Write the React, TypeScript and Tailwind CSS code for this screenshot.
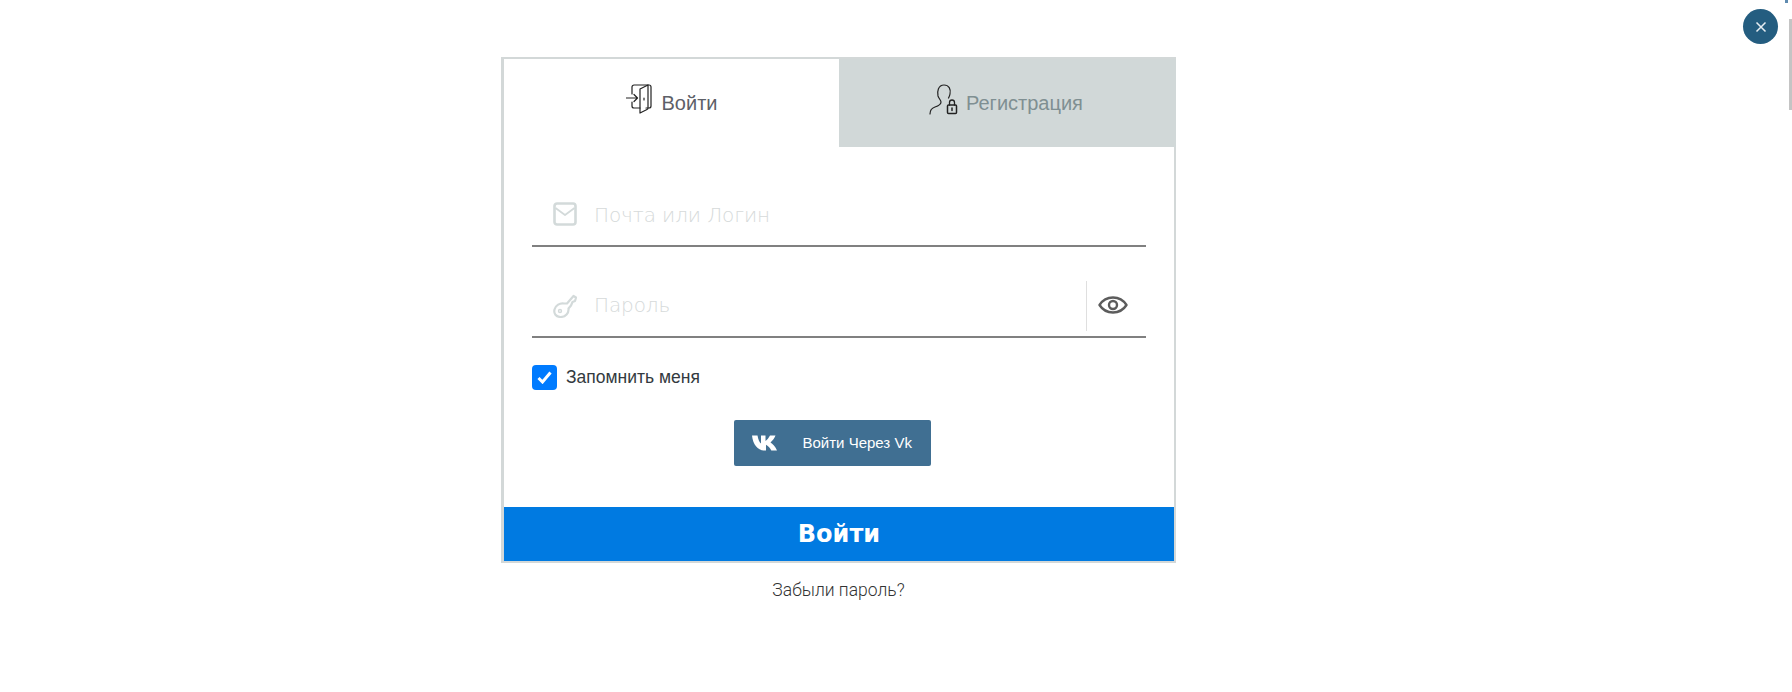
export default function App() {
  return (
    <div className="relative h-[692px] w-full overflow-hidden bg-white font-['Liberation_Sans',sans-serif]">
      <button className="absolute left-[1743px] top-[9px] flex h-[35px] w-[35px] items-center justify-center rounded-full bg-[#245d80]">
        <svg width="12" height="12" viewBox="0 0 12 12" fill="none" stroke="#e8eef2" strokeWidth="1.5">
          <path d="M1.500 1.500l9 9M10.500 1.500l-9 9" />
        </svg>
      </button>
      <div className="absolute right-0 top-[19px] h-[91px] w-[3px] bg-[#c4c4c4]" />
      <div className="absolute left-[1785px] top-0 h-[3px] w-[3px] bg-[#5f8bb0]" />

      <div className="ml-[501px] flex w-[675px] flex-col items-center pt-[57px]">
        <div className="flex h-[506px] w-[675px] flex-col border-t-2 border-r-2 border-b-2 border-l-[3px] border-[#d3d8d8] bg-white">
          <div className="flex h-[88px] shrink-0">
            <div className="flex w-[335px] items-center justify-center gap-[10px] pb-[2px] text-[20px] text-[#5d6068]">
              <svg width="26" height="30" viewBox="0 0 26 30" fill="none" stroke="#222" strokeWidth="1.200" strokeLinejoin="round" strokeLinecap="round" className="mt-[-7px]">
                <path d="M6 10V3A2 2 0 0 1 8 1H23a2 2 0 0 1 2 2V22a2 2 0 0 1-2 2h-3" />
                <path d="M6 18v4a2 2 0 0 0 2 2H14" />
                <path d="M14 5l8-4v23a1.500 1.500 0 0 1-1 1.500l-7 3.500z" />
                <path d="M0.500 14h11M8 10.500L11.500 14 8 17.500" />
                <path d="M18 14v2" />
              </svg>
              <span className="mt-[2px]">Войти</span>
            </div>
            <div className="mr-[-2px] flex flex-1 items-center justify-center gap-[8px] bg-[#d1d8d8] pb-[2px] pr-[3px] text-[20px] text-[#7f8f92]">
              <svg width="29" height="31" viewBox="0 0 29 31" fill="none" stroke="#222" strokeWidth="1.200" strokeLinecap="round" className="mt-[-6px]">
                <path d="M1 30c0-4 2-6 5-7 3-1 6-2 6-5 0-2-2-3-3-6-1-4 0-11 6-11 5 0 7 4 6 9-.3 2-1 3-1.500 4" />
                <rect x="18.500" y="21" width="9" height="8.500" rx="1" strokeWidth="1.500" />
                <path d="M20.500 21v-2.500a2.500 2.500 0 0 1 5 0V21" strokeWidth="1.300" />
                <path d="M23 24v2.500" strokeWidth="1.500" />
              </svg>
              <span className="mt-[2px]">Регистрация</span>
            </div>
          </div>

          <div className="flex flex-1 flex-col px-[28px]">
            <div className="mt-[38px] flex h-[62px] items-center border-b-2 border-[#808080] pb-[2px] pl-[21px]">
              <svg width="24" height="24" viewBox="0 0 24 24" fill="none" stroke="#d3dada" strokeWidth="2.600" strokeLinejoin="round">
                <rect x="1.500" y="1.500" width="21" height="21" rx="2.500" />
                <path d="M2.500 6L12 13l9.500-7" strokeWidth="1.800" />
              </svg>
              <span className="ml-[17px] mt-[1px] font-['DejaVu_Sans',sans-serif] text-[20px] font-extralight tracking-[-0.1px] text-[#d6dada]">Почта или Логин</span>
            </div>

            <div className="mt-[29px] flex h-[62px] items-center border-b-2 border-[#808080] pl-[21px]">
              <svg width="24" height="24" viewBox="0 0 24 24" fill="none" stroke="#d3dada" strokeWidth="2.200" strokeLinecap="round" strokeLinejoin="round">
                <path d="M14 9.500L20.500 2 23 3.500 22 7 19.500 8 18 11.500 15.500 14.500C16 19 12.500 23 7.500 23 3 23 .5 19.500 1.500 15.500 2.500 11.500 7 8.500 11 9.500z" />
                <circle cx="7" cy="17" r="1.500" strokeWidth="1.400" />
              </svg>
              <span className="ml-[17px] mb-[3px] flex-1 font-['DejaVu_Sans',sans-serif] text-[20px] font-extralight tracking-[-0.1px] text-[#d6dada]">Пароль</span>
              <div className="flex h-[50px] w-[60px] items-center justify-center border-l border-[#dfdfdf] pb-[2px] pr-[8px]">
                <svg width="30" height="18" viewBox="0 0 30 18" fill="none" stroke="#5c5c5c" strokeWidth="2.400">
                  <path d="M1.500 9C5 3.500 9.500 1.500 15 1.500S25 3.500 28.500 9C25 14.500 20.500 16.500 15 16.500S5 14.500 1.500 9z" strokeLinejoin="round" />
                  <circle cx="15" cy="9" r="4" />
                </svg>
              </div>
            </div>

            <div className="mt-[26px] flex items-center gap-[9px]">
              <div className="flex h-[25px] w-[25px] items-center justify-center rounded-[4px] bg-[#007bff]">
                <svg width="15" height="13" viewBox="0 0 15 13" fill="none" stroke="#fff" strokeWidth="3">
                  <path d="M1.500 7l4 4 8-9.500" />
                </svg>
              </div>
              <span className="text-[17.5px] text-[#333a40]">Запомнить меня</span>
            </div>

            <div className="mt-[30px] flex justify-center pr-[14px]">
              <div className="flex h-[46px] w-[197px] items-center rounded-[2px] bg-[#406f92] pl-[18px] text-[15px] text-white">
                <svg width="28" height="16" viewBox="0 0 28 16" fill="#fff">
                  <path d="M0 0.500h5.500c.6 4 2.200 7 3.500 8V.500h4.500v5.500C15 5 17 2.500 18 .500h5.500c-1 2.800-3.200 5.300-5 7 2 1.300 5 4.300 6.500 8h-5.700c-1-2.200-3.500-5-5.300-5.800v5.800h-1.500C6 15.500 1 10 0 .500z" />
                </svg>
                <span className="ml-[23px]">Войти Через Vk</span>
              </div>
            </div>
          </div>

          <div className="flex h-[54px] shrink-0 items-center justify-center bg-[#007ae1] font-['DejaVu_Sans',sans-serif] text-[24px] font-bold text-white">Войти</div>
        </div>
        <div className="mt-[15px] font-['Roboto',sans-serif] text-[17.5px] font-light leading-[24px] text-[#333]">Забыли пароль?</div>
      </div>
    </div>
  );
}
